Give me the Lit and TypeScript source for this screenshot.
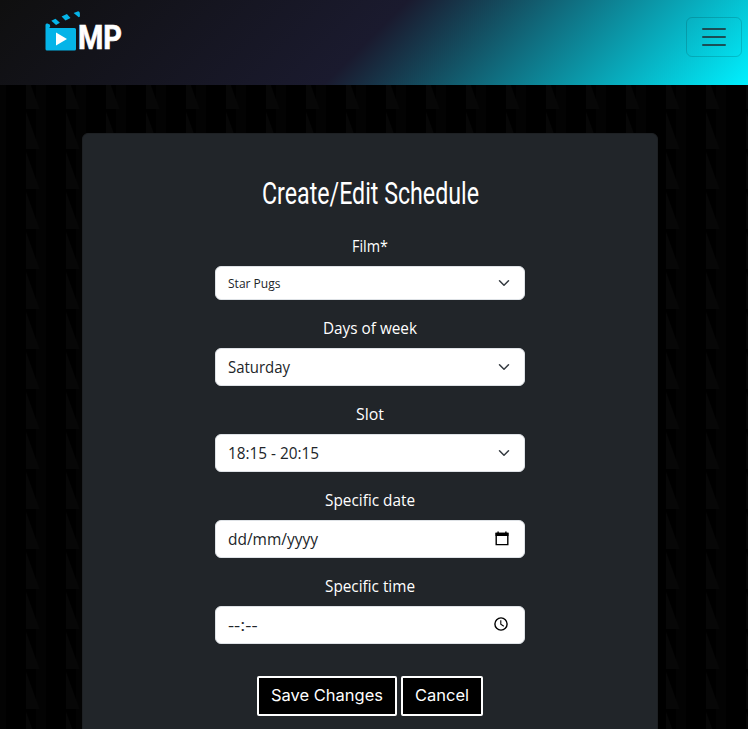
import { LitElement, html, svg, css } from "lit";
import { customElement } from "lit/decorators.js";

/** One line of text set to an exact advance width. */
const line = (text: string, width: number, height: number, baseline: number, cls = "") => html`
  <svg class="line ${cls}" width=${width} height=${height}>
    <text x="0" y=${baseline} textLength=${width} lengthAdjust="spacingAndGlyphs">${text}</text>
  </svg>`;

const chevron = html`<svg class="chevron" width="16" height="12" viewBox="0 0 16 16">
  <path d="m2 5 6 6 6-6" />
</svg>`;

const calendar = html`<svg class="calendar" width="16" height="16" viewBox="0 0 16 16">
  <path d="M2.2 2.4h11.6v11.2H2.2z" fill="none" stroke="#000" stroke-width="1.4" />
  <path d="M1.5 1.7h13v3.4h-13zM3.4.4h1.4V3H3.4zM11.2.4h1.4V3h-1.4z" />
</svg>`;

const clock = html`<svg class="clock" width="16" height="16" viewBox="0 0 16 16">
  <circle cx="8" cy="8" r="6.1" fill="none" stroke="#000" stroke-width="1.4" />
  <path d="M7.8 4.3v4l3 1.9" fill="none" stroke="#000" stroke-width="1.1" />
</svg>`;

interface Field {
  label: string;
  labelWidth: number;
  value: string;
  valueWidth: number;
  icon: unknown;
  small?: boolean;
}

const fields: Field[] = [
  { label: "Film*", labelWidth: 36, value: "Star Pugs", valueWidth: 52.5, icon: chevron, small: true },
  { label: "Days of week", labelWidth: 94, value: "Saturday", valueWidth: 62, icon: chevron },
  { label: "Slot", labelWidth: 28, value: "18:15 - 20:15", valueWidth: 91, icon: chevron },
  { label: "Specific date", labelWidth: 90, value: "dd/mm/yyyy", valueWidth: 90, icon: calendar },
  { label: "Specific time", labelWidth: 90, value: "--:--", valueWidth: 29.5, icon: clock },
];

@customElement("app-root")
export class AppRoot extends LitElement {
  static styles = css`
    :host {
      display: flex;
      flex-direction: column;
      height: 100vh;
      overflow: hidden;
      color: #fff;
      font: 16px "Open Sans", sans-serif;
    }
    * { box-sizing: border-box; }
    svg { display: block; flex: none; }
    .line { overflow: visible; fill: currentColor; }
    header {
      flex: none;
      height: 85px;
      display: flex;
      justify-content: space-between;
      align-items: flex-start;
      padding: 0 6px 0 40px;
      background: linear-gradient(135deg, #0f0f0f 0%, #1a1a2e 49%, #00f0ff 100%);
    }
    .mark { font: 700 33px Roboto, sans-serif; stroke: #fff; stroke-width: 0.7; }
    .toggler {
      width: 56px;
      height: 40px;
      margin: 17px 0 0;
      padding: 0;
      display: grid;
      place-items: center;
      background: none;
      border: 1px solid rgba(0, 0, 0, 0.15);
      border-radius: 6px;
    }
    .toggler path {
      fill: none;
      stroke: rgba(33, 37, 41, 0.75);
      stroke-width: 2;
      stroke-linecap: round;
    }
    main {
      position: relative;
      flex: 1;
      min-height: 0;
      padding: 48px 90px 0 82px;
      background: #000;
    }
    .pattern { position: absolute; inset: 0; width: 100%; height: 100%; }
    .card {
      position: relative;
      height: 640px;
      padding: 41px 0 0;
      display: flex;
      flex-direction: column;
      align-items: center;
      background: #212529;
      border: 1px solid #1d2023;
      border-radius: 6px;
    }
    .title { font: 30.5px Roboto, sans-serif; }
    h1 { margin: 0 0 21px; height: 38px; }
    .field {
      width: 310px;
      margin-bottom: 16px;
      display: flex;
      flex-direction: column;
      align-items: center;
      gap: 8px;
    }
    .control {
      width: 100%;
      height: 38px;
      padding: 0 12px;
      display: flex;
      align-items: center;
      justify-content: space-between;
      color: #212529;
      background: #fff;
      border: 1px solid #dee2e6;
      border-radius: 6px;
    }
    .control.small { height: 34px; }
    .tiny { font-size: 12.5px; }
    .chevron path {
      fill: none;
      stroke: #343a40;
      stroke-width: 2;
      stroke-linecap: round;
      stroke-linejoin: round;
    }
    .calendar { margin-right: 2px; }
    .clock { margin: 0 3px 2px 0; }
    .actions { display: flex; gap: 4px; margin-top: 16px; }
    .btn {
      height: 40px;
      margin: 0;
      padding: 0 12px;
      color: #fff;
      background: #000;
      border: 2px solid #fff;
      border-radius: 2px;
      font: 16px Inter, sans-serif;
    }
  `;

  private logo() {
    return svg`<svg width="90" height="60" viewBox="40 0 90 60" role="img">
      <g fill="#05b4e8">
        <path d="M45.5 25q0-2 2-1.5l2.3 1q1 3-.8 3.5h25.5q1.5 0 1.5 1.5V49q0 1.5-1.5 1.5H47q-1.5 0-1.5-1.5z" />
        <path d="m51.3 20.8 4.2-2 4.4 3.9-3.8 2.2z" />
        <path d="m61.6 16.6 5.3-2.5 3.6 3.9-5 2.5z" />
        <path d="m73.6 12.9 4.6-1.7q1.8.3 1.7 2.5v2.8l-1.1.7z" />
      </g>
      <path d="M56 32.5 67 39l-11 6.5z" fill="#fff" />
      <text class="mark" x="78" y="49" textLength="44" lengthAdjust="spacingAndGlyphs" fill="#fff">MP</text>
    </svg>`;
  }

  render() {
    return html`
      <header>
        ${this.logo()}
        <button class="toggler" aria-label="Menu">
          <svg width="30" height="30" viewBox="0 0 30 30"><path d="M4 7h22M4 15h22M4 23h22" /></svg>
        </button>
      </header>
      <main>
        <svg class="pattern">
          <defs>
            <pattern id="wedges" x="6" y="24" width="40" height="40" patternUnits="userSpaceOnUse">
              <rect x="30" width="10" height="40" fill="#030303" />
              <path d="M20 3v37h13.3z" fill="#070707" />
            </pattern>
          </defs>
          <rect width="100%" height="100%" fill="url(#wedges)" />
        </svg>
        <section class="card">
          <h1>${line("Create/Edit Schedule", 217, 38, 29, "title")}</h1>
          ${fields.map(
            (f) => html`<div class="field">
              ${line(f.label, f.labelWidth, 24, 18)}
              <div class="control ${f.small ? "small" : ""}">
                ${line(f.value, f.valueWidth, 24, f.small ? 17 : 18, f.small ? "tiny" : "")}
                ${f.icon}
              </div>
            </div>`
          )}
          <div class="actions">
            <button class="btn">${line("Save Changes", 112, 24, 17)}</button>
            <button class="btn">${line("Cancel", 54, 24, 17)}</button>
          </div>
        </section>
      </main>
    `;
  }
}
